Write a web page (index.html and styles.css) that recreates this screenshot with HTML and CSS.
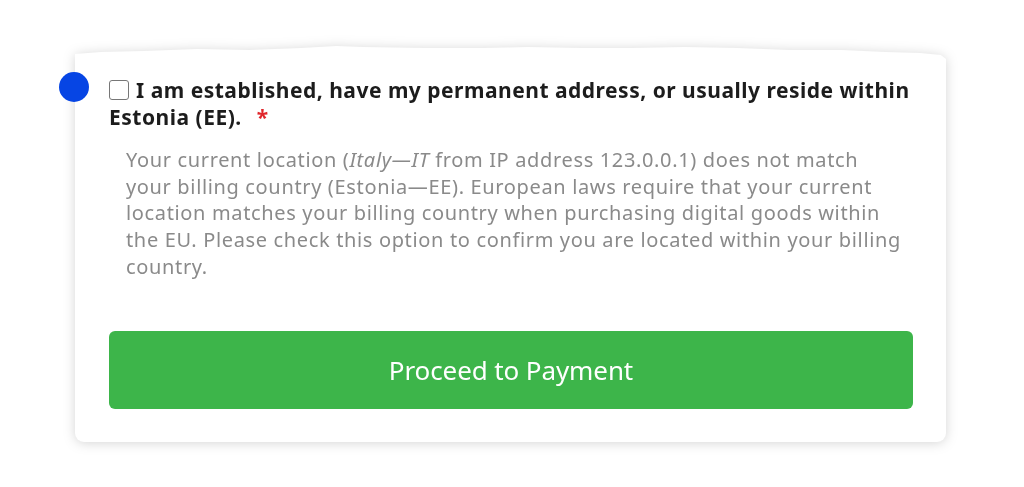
FILE: index.html
```html
<!DOCTYPE html>
<html lang="en">
<head>
<meta charset="utf-8">
<title>Confirm location</title>
<link rel="stylesheet" href="styles.css">
</head>
<body>
<div class="stage">
  <div class="card-shadow">
    <div class="card">
      <label class="consent">
        <span class="box"></span>I am established, have my permanent address, or usually reside within Estonia (EE).<span class="req">*</span>
      </label>
      <p class="note">Your current location (<em>Italy—IT</em> from IP address 123.0.0.1) does not match your billing country (Estonia—EE). European laws require that your current location matches your billing country when purchasing digital goods within the EU. Please check this option to confirm you are located within your billing country.</p>
      <button class="pay" type="button">Proceed to Payment</button>
    </div>
  </div>
  <span class="dot"></span>
</div>
</body>
</html>
```
FILE: styles.css
```css
html, body {
  margin: 0;
  background: #ffffff;
}
body {
  width: 1024px;
  height: 487px;
  overflow: hidden;
  font-family: "Noto Sans", "Open Sans", sans-serif;
}
.stage {
  position: relative;
  padding: 44px 0 0 75px;
}
.card-shadow {
  width: 871px;
  filter: drop-shadow(0 1px 6px rgba(0, 0, 0, 0.17));
}
.card {
  background: #ffffff;
  height: 398px;
  box-sizing: border-box;
  padding: 33px 33px 33px 34px;
  border-radius: 0 0 9px 9px;
  clip-path: polygon(0 10px, 3% 8px, 8% 7px, 14% 5px, 20% 6px, 26% 4px, 30% 2px, 33% 3px, 40% 4px, 47% 4px, 52% 3px, 58% 4px, 64% 4px, 70% 3px, 76% 4px, 82% 6px, 88% 6px, 93% 8px, 97% 9px, 99.4% 11px, 100% 15px, 100% 100%, 0 100%);
}
.consent {
  display: block;
  font-weight: 700;
  font-size: 21px;
  line-height: 27px;
  color: #1c1c1c;
  letter-spacing: 0.5px;
}
.box {
  display: inline-block;
  width: 18px;
  height: 18px;
  border: 1.5px solid #777777;
  border-radius: 3px;
  vertical-align: -2px;
  margin-right: 7px;
}
.req {
  color: #e0262b;
  margin-left: 15px;
}
.note {
  margin: 16px 7px 0 17px;
  font-size: 20px;
  line-height: 26.7px;
  letter-spacing: 0.65px;
  color: #8a8a8a;
}
.note em {
  font-style: italic;
}
.pay {
  display: block;
  width: 100%;
  height: 78px;
  margin-top: 50px;
  border: 0;
  border-radius: 6px;
  background: #3db54a;
  color: #ffffff;
  font-family: inherit;
  font-size: 26px;
  letter-spacing: -0.1px;
  cursor: pointer;
}
.dot {
  position: absolute;
  left: 59px;
  top: 72px;
  width: 30px;
  height: 30px;
  border-radius: 50%;
  background: #0645e4;
}
```
